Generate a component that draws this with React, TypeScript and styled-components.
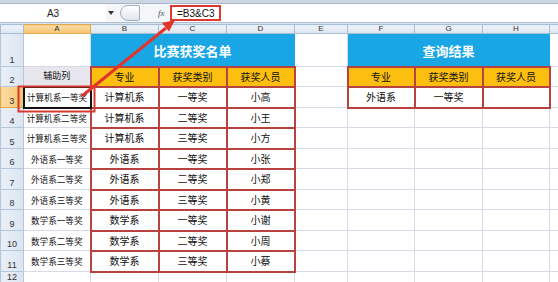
import styled, { createGlobalStyle, css } from 'styled-components';

const GlobalStyle = createGlobalStyle`
  html, body {
    margin: 0;
    padding: 0;
    background: #fff;
  }
  body {
    font-family: "Noto Sans CJK SC", "Liberation Sans", sans-serif;
  }
`;

const BLUE = '#18a6e4';
const ORANGE = '#fcbf10';
const RED = '#b8423f';
const GRID = '#d6dbe5';

const depts = ['计算机系', '外语系', '数学系'];
const prizes = ['一等奖', '二等奖', '三等奖'];
const people = ['小高', '小王', '小方', '小张', '小郑', '小黄', '小谢', '小周', '小蔡'];

const rows = depts.flatMap((d) => prizes.map((p) => ({ dept: d, prize: p })));
const rowHeights = [21, 20, 21, 20, 21, 20, 21, 20, 21];

const colWidths = [23, 67, 68, 68, 68, 53, 67, 68, 67, 9];
const letters = ['A', 'B', 'C', 'D', 'E', 'F', 'G', 'H', ''];

const Page = styled.div`
  position: relative;
  width: 558px;
  height: 282px;
  overflow: hidden;
  background: #fff;
`;

const TopStrip = styled.div`
  height: 3px;
  background: #cdd7e4;
  border-bottom: 1px solid #a7b6ca;
`;

const FormulaBar = styled.div`
  display: flex;
  align-items: center;
  height: 18px;
  background: #f4f6f9;
  border-bottom: 1px solid #aebdd0;
`;

const NameBox = styled.div`
  width: 106px;
  height: 18px;
  background: #fff;
  display: flex;
  align-items: center;
  justify-content: center;
  font-family: "Liberation Sans", sans-serif;
  font-size: 10px;
  color: #222;
`;

const DropArrow = styled.div`
  width: 0;
  height: 0;
  margin-left: 2px;
  border-left: 3px solid transparent;
  border-right: 3px solid transparent;
  border-top: 4px solid #333;
`;

const RoundButton = styled.div`
  width: 18px;
  height: 14px;
  margin-left: 6px;
  border: 1px solid #9fb0c6;
  border-radius: 8px 2px 2px 8px;
  background: linear-gradient(#ffffff, #dfe6ef);
`;

const FxLabel = styled.div`
  margin-left: 18px;
  width: 11px;
  font-family: "Liberation Serif", serif;
  font-style: italic;
  font-size: 9px;
  color: #555;
`;

const FormulaInput = styled.div`
  flex: 1;
  height: 18px;
  background: #fff;
  display: flex;
  align-items: center;
  padding-left: 1px;
`;

const FormulaText = styled.span`
  display: inline-flex;
  align-items: center;
  height: 12px;
  width: 42px;
  padding-left: 5px;
  border: 2px solid #e0382f;
  font-family: "Liberation Sans", sans-serif;
  font-size: 10px;
  color: #111;
`;

const Gap = styled.div`
  height: 1px;
  background: #dbe3ed;
`;

const Sheet = styled.table`
  width: 558px;
  table-layout: fixed;
  border-collapse: collapse;
  border-spacing: 0;
`;

const HeadCell = styled.th<{ $active?: boolean }>`
  height: 8px;
  padding: 0;
  font-family: "Liberation Sans", sans-serif;
  font-weight: normal;
  font-size: 8px;
  line-height: 8px;
  color: #333;
  border: 1px solid #a9bdd3;
  background: linear-gradient(#eef3f9, #dbe4ef);
  ${(p) =>
    p.$active &&
    css`
      background: linear-gradient(#fbdca6, #f6c46d);
      border-color: #e0a84d;
    `}
`;

const RowNum = styled.th<{ $active?: boolean; $top?: boolean }>`
  padding: 0 0 1px 0;
  vertical-align: ${(p) => (p.$top ? 'top' : 'bottom')};
  font-family: "Liberation Sans", sans-serif;
  font-weight: normal;
  font-size: 9px;
  line-height: 10px;
  color: #333;
  border: 1px solid #b7c7da;
  background: linear-gradient(90deg, #e9eff7, #dce5f0);
  ${(p) =>
    p.$active &&
    css`
      background: linear-gradient(90deg, #fbdca6, #f6c46d);
      border-color: #e0a84d;
    `}
`;

type CellKind = 'plain' | 'title' | 'head' | 'data' | 'helper' | 'helperHead' | 'selected';

const Cell = styled.td<{ $kind?: CellKind }>`
  padding: 0;
  overflow: hidden;
  white-space: nowrap;
  text-align: center;
  vertical-align: middle;
  font-size: 10px;
  line-height: 12px;
  color: #111;
  border: 1px solid ${GRID};
  background: #fff;
  ${(p) =>
    p.$kind === 'title' &&
    css`
      background: ${BLUE};
      border-color: ${BLUE};
      color: #fff;
      font-weight: bold;
      font-size: 13px;
      line-height: 16px;
      padding-top: 2px;
    `}
  ${(p) =>
    p.$kind === 'head' &&
    css`
      background: ${ORANGE};
      border: 2px solid ${RED};
    `}
  ${(p) =>
    p.$kind === 'data' &&
    css`
      border: 2px solid ${RED};
    `}
  ${(p) =>
    p.$kind === 'helper' &&
    css`
      font-size: 8.6px;
    `}
  ${(p) =>
    p.$kind === 'helperHead' &&
    css`
      font-size: 9px;
      background: #e7e6ee;
    `}
  ${(p) =>
    p.$kind === 'selected' &&
    css`
      font-size: 8.6px;
      border: 2px solid #111;
    `}
`;

const Row = styled.tr<{ $h: number }>`
  height: ${(p) => p.$h}px;
`;

const Overlay = styled.svg`
  position: absolute;
  left: 0;
  top: 0;
  pointer-events: none;
`;

function Blank() {
  return <Cell />;
}

export default function App() {
  return (
    <Page>
      <GlobalStyle />
      <TopStrip />
      <FormulaBar>
        <NameBox>A3</NameBox>
        <DropArrow />
        <RoundButton />
        <FxLabel>fx</FxLabel>
        <FormulaInput>
          <FormulaText>=B3&amp;C3</FormulaText>
        </FormulaInput>
      </FormulaBar>
      <Gap />
      <Sheet>
        <colgroup>
          {colWidths.map((w, i) => (
            <col key={i} style={{ width: w }} />
          ))}
        </colgroup>
        <tbody>
          <Row $h={9}>
            <HeadCell />
            {letters.map((l, i) => (
              <HeadCell key={i} $active={l === 'A'}>
                {l}
              </HeadCell>
            ))}
          </Row>
          <Row $h={33}>
            <RowNum>1</RowNum>
            <Blank />
            <Cell $kind="title" colSpan={3}>
              比赛获奖名单
            </Cell>
            <Blank />
            <Cell $kind="title" colSpan={3}>
              查询结果
            </Cell>
            <Blank />
          </Row>
          <Row $h={20}>
            <RowNum>2</RowNum>
            <Cell $kind="helperHead">辅助列</Cell>
            <Cell $kind="head">专业</Cell>
            <Cell $kind="head">获奖类别</Cell>
            <Cell $kind="head">获奖人员</Cell>
            <Blank />
            <Cell $kind="head">专业</Cell>
            <Cell $kind="head">获奖类别</Cell>
            <Cell $kind="head">获奖人员</Cell>
            <Blank />
          </Row>
          {rows.map((r, i) => (
            <Row $h={rowHeights[i]} key={i}>
              <RowNum $active={i === 0}>{i + 3}</RowNum>
              <Cell $kind={i === 0 ? 'selected' : 'helper'}>
                {r.dept}
                {r.prize}
              </Cell>
              <Cell $kind="data">{r.dept}</Cell>
              <Cell $kind="data">{r.prize}</Cell>
              <Cell $kind="data">{people[i]}</Cell>
              <Blank />
              {i === 0 ? (
                <>
                  <Cell $kind="data">外语系</Cell>
                  <Cell $kind="data">一等奖</Cell>
                  <Cell $kind="data" />
                </>
              ) : (
                <>
                  <Blank />
                  <Blank />
                  <Blank />
                </>
              )}
              <Blank />
            </Row>
          ))}
          <Row $h={14}>
            <RowNum $top>12</RowNum>
            {letters.map((_, i) => (
              <Blank key={i} />
            ))}
          </Row>
        </tbody>
      </Sheet>
      <Overlay width={558} height={282} viewBox="0 0 558 282">
        <rect x={18.5} y={86.5} width={76} height={25} fill="none" stroke="#d8392f" strokeWidth={2} />
        <line x1={82} y1={96} x2={166} y2={28} stroke="#e2342a" strokeWidth={3} />
        <polygon points="175,20 169,31.5 162,23" fill="#e2342a" />
      </Overlay>
    </Page>
  );
}
